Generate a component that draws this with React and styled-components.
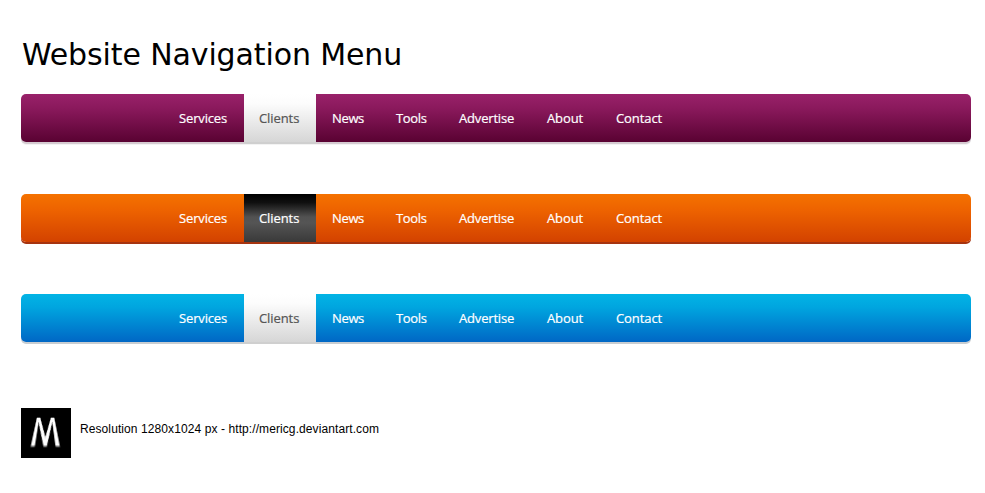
import React from "react";
import styled, { createGlobalStyle } from "styled-components";

const GlobalStyle = createGlobalStyle`
  * { box-sizing: border-box; }
  body { margin: 0; background: #fff; }
`;

const Page = styled.main`
  width: 985px;
  height: 493px;
  padding: 35px 14px 0 21px;
  background: #fff;
  overflow: hidden;
`;

const Title = styled.h1`
  margin: 0 0 19px 1px;
  height: 40px;
  font: 400 30px/40px "DejaVu Sans", sans-serif;
  letter-spacing: -0.12px;
  color: #000;
  white-space: nowrap;
`;

const MenuList = styled.div`
  display: flex;
  flex-direction: column;
  gap: 52px;
`;

const Bar = styled.nav`
  display: flex;
  height: 48px;
  padding-left: 142px;
  border-radius: 5px;
  background: ${(p) => p.$theme.bar};
  box-shadow: ${(p) => p.$theme.shadow};
`;

const Item = styled.a`
  display: flex;
  flex: none;
  width: ${(p) => p.$width}px;
  height: 48px;
  padding-left: ${(p) => p.$pad}px;
  font: 500 13px/49px "Open Sans", "Noto Sans", sans-serif;
  letter-spacing: ${(p) => p.$spacing}px;
  color: ${(p) => (p.$active ? p.$theme.activeText : "#fff")};
  -webkit-text-stroke: 0.2px currentColor;
  background: ${(p) => (p.$active ? p.$theme.active : "transparent")};
  box-shadow: ${(p) => (p.$active ? p.$theme.activeShadow : "none")};
  white-space: nowrap;
`;

const Footer = styled.footer`
  display: flex;
  margin-top: 66px;
  gap: 9px;
`;

const Logo = styled.div`
  display: flex;
  justify-content: center;
  width: 50px;
  height: 50px;
  background: #000;
  perspective: 60px;
`;

const LogoLetter = styled.span`
  font: 400 40px/50px "Open Sans", sans-serif;
  color: #fff;
  -webkit-text-stroke: 0.8px #fff;
  transform: translate(-0.5px, -5px) rotateX(46deg) scale(0.74, 1.38);
`;

const Caption = styled.p`
  margin: 0;
  height: 42px;
  font: 400 12px/42px "Liberation Sans", Arial, sans-serif;
  letter-spacing: 0.09px;
  color: #000;
  white-space: nowrap;
`;

const lightTab = {
  active: "linear-gradient(#fff 0%, #fcfcfc 20%, #d6d6d6 100%)",
  activeText: "#555",
  activeShadow: "0 2px 0 #cfcfcf",
};

const themes = [
  {
    name: "Purple",
    bar: "linear-gradient(#99216a 0%, #8a195c 30%, #590232 100%)",
    shadow: "0 2px 0 #d5cbd1, 0 3px 0 #f3f3f3",
    ...lightTab,
  },
  {
    name: "Orange",
    bar: "linear-gradient(#f57200 0%, #ed6200 35%, #d34200 100%)",
    shadow: "0 2px 0 #a63410",
    active: "linear-gradient(#000 0%, #101010 18%, #525252 48%, #555 60%, #393939 100%)",
    activeText: "#fff",
    activeShadow: "none",
  },
  {
    name: "Blue",
    bar: "linear-gradient(#02b4e5 0%, #00a5df 28%, #0067c5 100%)",
    shadow: "0 2px 0 #c8cdd1",
    ...lightTab,
  },
];

const items = [
  { label: "Services", width: 81, pad: 16, spacing: -0.15 },
  { label: "Clients", width: 72, pad: 15, spacing: -0.08 },
  { label: "News", width: 64, pad: 16, spacing: -0.35 },
  { label: "Tools", width: 63, pad: 16, spacing: -0.35 },
  { label: "Advertise", width: 88, pad: 16, spacing: -0.18 },
  { label: "About", width: 69, pad: 16, spacing: -0.1 },
  { label: "Contact", width: 78, pad: 16, spacing: -0.08 },
];

function Menu({ theme, current }) {
  return (
    <Bar aria-label={theme.name} $theme={theme}>
      {items.map((i) => (
        <Item
          key={i.label}
          $theme={theme}
          $width={i.width}
          $pad={i.pad}
          $spacing={i.spacing}
          $active={i.label === current}
        >
          {i.label}
        </Item>
      ))}
    </Bar>
  );
}

export default function App() {
  return (
    <Page>
      <GlobalStyle />
      <Title>Website Navigation Menu</Title>
      <MenuList>
        {themes.map((t) => (
          <Menu key={t.name} theme={t} current="Clients" />
        ))}
      </MenuList>
      <Footer>
        <Logo>
          <LogoLetter>M</LogoLetter>
        </Logo>
        <Caption>Resolution 1280x1024 px - http://mericg.deviantart.com</Caption>
      </Footer>
    </Page>
  );
}
